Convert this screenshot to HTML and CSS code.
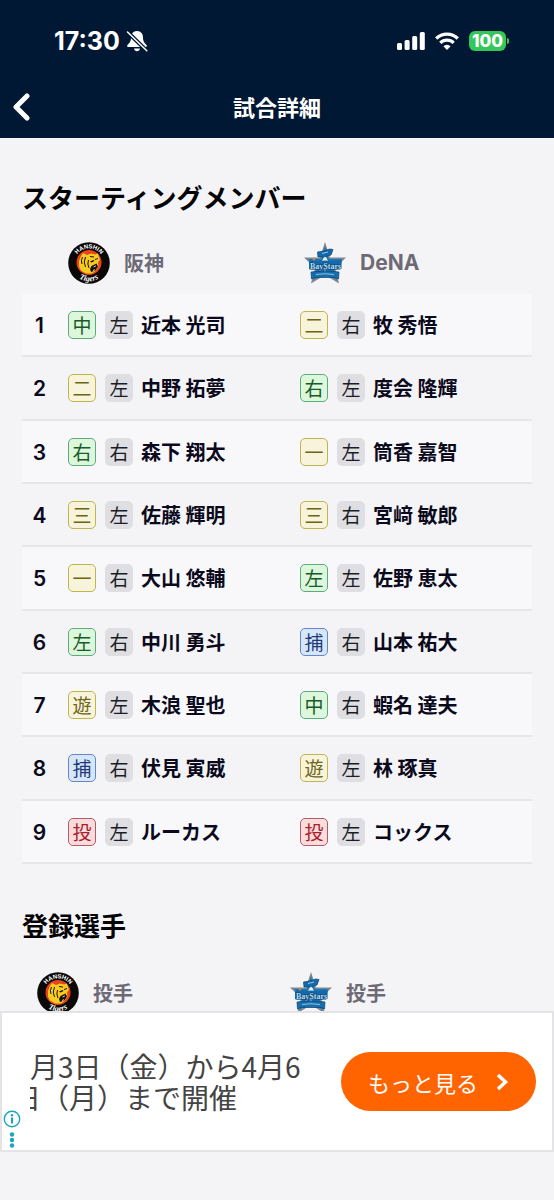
FILE: index.html
```html
<!DOCTYPE html>
<html lang="ja">
<head>
<meta charset="utf-8">
<meta name="viewport" content="width=device-width, initial-scale=1">
<title>試合詳細</title>
<link rel="stylesheet" href="styles.css">
</head>
<body>
<svg class="defs" width="0" height="0" aria-hidden="true">
  <defs>
    <path id="arc-top" d="M7.1 24.5A14.4 14.4 0 1 1 34.9 24.5"/>
    <path id="arc-bottom" d="M2.800 24A18.500 18.500 0 0 0 39.200 24"/>
    <symbol id="tigers" viewBox="0 0 42 42">
      <circle cx="21" cy="21" r="20.8" fill="#0b0808"/>
      <circle cx="21" cy="20.5" r="12.500" fill="#e8431f"/>
      <path d="M11 19l2-5 2-3 4 2 4-1.500 4 1 3-1 1 4 1 2-2 3 .5 4-2.500 4-4 3-6 0-5-3-2-4z" fill="#f7cb20"/>
      <path d="M14.500 15q-2 4-.5 7M17.500 15q-2.500 5 0 10M20.500 18q-1.500 4 .5 8M22 14.500l4 .5M27 17.500l3-1" fill="none" stroke="#1a1008" stroke-width="1"/>
      <path d="M22 19.500l3.500-1.500 1 1-3 1.500zM23.500 24l5-2.500 1.500 3-2.500 4-4.500 1.500-1-3z" fill="#1a1008"/>
      <path d="M25.500 25l2.500-1.200M25 28.500l2-.8" stroke="#fff" stroke-width=".8"/>
      <text class="tigers-top" text-anchor="middle"><textPath href="#arc-top" startOffset="50%">HANSHIN</textPath></text>
      <text class="tigers-bottom" text-anchor="middle"><textPath href="#arc-bottom" startOffset="50%">Tigers</textPath></text>
    </symbol>
    <symbol id="baystars" viewBox="0 0 42 42">
      <path d="M21 0l5 15.500H42L31 26l4 15.500L21 33 7 41.500 11 26 0 15.500h16z" fill="#7c8790"/>
      <path d="M21 4l3.800 13H38l-9 8 4 13-12-8-12 8 4-13-9-8h13.200z" fill="#1976b8"/>
      <path d="M21 13l3.500 7-3.500 12-3.500-12z" fill="#e4f0f6"/>
      <path d="M13.500 10q7-.5 12-3l3.500.5-2 5.500q-6 2.500-13 2z" fill="#1469ac" stroke="#0b416f" stroke-width=".7"/>
      <path d="M18 11.500l6-1.500" stroke="#9bc8e2" stroke-width="1"/>
      <path d="M5 19l5-2 4 2 7-.5 7 .5 10-1-1 9-9 1-7-.8-8 .8-8-1z" fill="#1469ac"/>
      <path d="M7 30q14-2.500 28 0l-.5 7q-2-1.500-5-1.500h-17q-3 0-5 1.500z" fill="#176eaf" stroke="#0b416f" stroke-width=".7"/>
      <path d="M12 32.500q9-1.500 18 0" fill="none" stroke="#8fc1df" stroke-width="1"/>
      <text class="baystars-name" x="21.500" y="26.500" text-anchor="middle">BayStars</text>
      <circle cx="10" cy="17" r="1.500" fill="#b98a60"/>
    </symbol>
  </defs>
</svg>

<header class="app-header">
  <div class="status-bar">
    <div class="status-group">
      <span class="clock">17:30</span>
      <svg width="22" height="22" viewBox="0 0 22 22" aria-hidden="true">
        <path d="M11 1C7 1 5 4 5 7.500c0 4-1.500 5.500-3.500 7.500-.8.900-.4 2 .8 2h17.400c1.200 0 1.600-1.100.8-2-2-2-3.500-3.500-3.500-7.500C17 4 15 1 11 1zM8 18.500h6c-.3 1.800-1.500 2.800-3 2.800s-2.700-1-3-2.800z" fill="#fff"/>
        <path d="M1.500 2L20.800 20.800" stroke="#001834" stroke-width="4"/>
        <path d="M1.500 2L20.800 20.800" stroke="#fff" stroke-width="1.500" stroke-linecap="round"/>
      </svg>
    </div>
    <div class="status-group status-right">
      <svg width="28" height="18" viewBox="0 0 28 18" fill="#fff" aria-hidden="true">
        <rect x="0" y="11" width="5" height="7" rx="1.500"/><rect x="7.600" y="8" width="5" height="10" rx="1.500"/><rect x="15.200" y="4" width="5" height="14" rx="1.500"/><rect x="22.800" width="5" height="18" rx="1.500"/>
      </svg>
      <svg width="24" height="18" viewBox="0 0 24 18" fill="none" stroke="#fff" stroke-width="3.200" aria-hidden="true">
        <path d="M1.200 6.500a15.500 15.500 0 0 1 21.600 0M5.300 10.800a9.500 9.500 0 0 1 13.400 0"/>
        <path d="M12 18l-3.600-3.700a5 5 0 0 1 7.200 0z" fill="#fff" stroke="none"/>
      </svg>
      <span class="battery">100</span>
    </div>
  </div>
  <nav class="nav-bar">
    <a class="back" href="#" aria-label="戻る">
      <svg width="18" height="28" viewBox="0 0 18 28" fill="none" stroke="#fff" stroke-width="5" stroke-linecap="round" stroke-linejoin="round" aria-hidden="true"><path d="M15 3L4 14l11 11"/></svg>
    </a>
    <h1 class="nav-title">試合詳細</h1>
  </nav>
</header>

<main class="content">
  <h2 class="section-title">スターティングメンバー</h2>
  <table class="lineup">
    <colgroup><col class="col-order"><col><col></colgroup>
    <thead>
      <tr>
        <td></td>
        <th scope="col"><div class="team"><svg class="logo" aria-hidden="true"><use href="#tigers"/></svg>阪神</div></th>
        <th scope="col"><div class="team visitor"><svg class="logo" aria-hidden="true"><use href="#baystars"/></svg><span class="latin">DeNA</span></div></th>
      </tr>
    </thead>
    <tbody>
      <tr><th scope="row">1</th>
        <td><div class="player"><span class="badge outfield">中</span><span class="badge">左</span><b>近本 光司</b></div></td>
        <td><div class="player"><span class="badge infield">二</span><span class="badge">右</span><b>牧 秀悟</b></div></td></tr>
      <tr><th scope="row">2</th>
        <td><div class="player"><span class="badge infield">二</span><span class="badge">左</span><b>中野 拓夢</b></div></td>
        <td><div class="player"><span class="badge outfield">右</span><span class="badge">左</span><b>度会 隆輝</b></div></td></tr>
      <tr><th scope="row">3</th>
        <td><div class="player"><span class="badge outfield">右</span><span class="badge">右</span><b>森下 翔太</b></div></td>
        <td><div class="player"><span class="badge infield">一</span><span class="badge">左</span><b>筒香 嘉智</b></div></td></tr>
      <tr><th scope="row">4</th>
        <td><div class="player"><span class="badge infield">三</span><span class="badge">左</span><b>佐藤 輝明</b></div></td>
        <td><div class="player"><span class="badge infield">三</span><span class="badge">右</span><b>宮﨑 敏郎</b></div></td></tr>
      <tr><th scope="row">5</th>
        <td><div class="player"><span class="badge infield">一</span><span class="badge">右</span><b>大山 悠輔</b></div></td>
        <td><div class="player"><span class="badge outfield">左</span><span class="badge">左</span><b>佐野 恵太</b></div></td></tr>
      <tr><th scope="row">6</th>
        <td><div class="player"><span class="badge outfield">左</span><span class="badge">右</span><b>中川 勇斗</b></div></td>
        <td><div class="player"><span class="badge catcher">捕</span><span class="badge">右</span><b>山本 祐大</b></div></td></tr>
      <tr><th scope="row">7</th>
        <td><div class="player"><span class="badge infield">遊</span><span class="badge">左</span><b>木浪 聖也</b></div></td>
        <td><div class="player"><span class="badge outfield">中</span><span class="badge">右</span><b>蝦名 達夫</b></div></td></tr>
      <tr><th scope="row">8</th>
        <td><div class="player"><span class="badge catcher">捕</span><span class="badge">右</span><b>伏見 寅威</b></div></td>
        <td><div class="player"><span class="badge infield">遊</span><span class="badge">左</span><b>林 琢真</b></div></td></tr>
      <tr><th scope="row">9</th>
        <td><div class="player"><span class="badge pitcher">投</span><span class="badge">左</span><b>ルーカス</b></div></td>
        <td><div class="player"><span class="badge pitcher">投</span><span class="badge">左</span><b>コックス</b></div></td></tr>
    </tbody>
  </table>

  <h2 class="section-title roster-title">登録選手</h2>
  <div class="roster">
    <div class="team"><svg class="logo" aria-hidden="true"><use href="#tigers"/></svg>投手</div>
    <div class="team"><svg class="logo" aria-hidden="true"><use href="#baystars"/></svg>投手</div>
  </div>
</main>

<aside class="ad">
  <div class="ad-copy">
    <p>月3日（金）から4月6</p>
    <p class="ad-line">日（月）まで開催</p>
  </div>
  <a class="ad-button" href="#">もっと見る
    <svg width="13" height="18" viewBox="0 0 13 18" fill="none" stroke="#fff" stroke-width="3.500" aria-hidden="true"><path d="M2 2l7.500 7L2 16"/></svg>
  </a>
  <button class="ad-options" type="button" aria-label="広告の情報">
    <svg width="18" height="40" viewBox="0 0 18 40" aria-hidden="true">
      <circle cx="9" cy="9" r="7.700" fill="none" stroke="#18a6bd" stroke-width="1.400"/>
      <circle cx="9" cy="5.200" r="1.200" fill="#18a6bd"/><path d="M9 7.500v6" stroke="#18a6bd" stroke-width="2"/>
      <g fill="#18a6bd"><circle cx="9" cy="24.500" r="2.200"/><circle cx="9" cy="30" r="2.200"/><circle cx="9" cy="35.500" r="2.200"/></g>
    </svg>
  </button>
</aside>
</body>
</html>
```

FILE: styles.css
```css
* { box-sizing: border-box; }

body {
  margin: 0;
  background: #f4f4f6;
  color: #0b0a1c;
  font-family: "Noto Sans CJK JP", sans-serif;
}

.defs { position: absolute; }

/* Header */
.app-header {
  padding-top: 22px;
  background: #001834;
  color: #fff;
}

.status-bar {
  display: flex;
  justify-content: space-between;
  align-items: center;
  height: 38px;
  padding: 0 48px 0 54px;
}

.status-group { display: flex; align-items: center; gap: 6px; }
.status-right { gap: 10px; }

.clock { font: 700 25px/38px Inter, sans-serif; }

.battery {
  position: relative;
  width: 37px;
  border-radius: 6px;
  background: #34c759;
  font: 800 17px/20px Inter, sans-serif;
  text-align: center;
}

.battery::after {
  content: "";
  position: absolute;
  top: 7px;
  right: -3px;
  width: 2px;
  height: 6px;
  border-radius: 0 2px 2px 0;
  background: #34c759;
}

.nav-bar {
  display: grid;
  grid-template-columns: 48px 1fr 48px;
  align-items: center;
  height: 78px;
  padding-top: 16px;
}

.back { display: flex; padding: 8px 12px; }

.nav-title {
  margin: 0;
  padding-bottom: 2px;
  font-size: 22px;
  line-height: 32px;
  text-align: center;
}

/* Sections */
.content { padding: 40px 22px 0; }

.section-title {
  margin: 0 0 16px;
  color: #050507;
  font-size: 26px;
  line-height: 38px;
}

.roster-title { margin-top: 42px; }

.team {
  display: flex;
  align-items: center;
  gap: 14px;
  color: #6d6a76;
  font-size: 20px;
  font-weight: 700;
  line-height: 42px;
}

.visitor { padding-left: 4px; }

.latin { font-family: Inter, sans-serif; font-size: 21px; }

.logo { flex: none; width: 42px; height: 42px; }

.tigers-top { fill: #fff; font: 700 6px "Liberation Sans", sans-serif; }
.tigers-bottom { fill: #fff; font: italic 700 8px "Liberation Serif", serif; }
.baystars-name {
  fill: #b9dcee;
  stroke: #0b416f;
  stroke-width: 1px;
  paint-order: stroke;
  font: 700 8px "Liberation Serif", serif;
}

/* Lineup */
.lineup {
  width: 100%;
  table-layout: fixed;
  border-collapse: separate;
  border-spacing: 0;
}

.col-order { width: 46px; }

.lineup th, .lineup td { padding: 0; text-align: left; }
.lineup thead tr { height: 62px; }
.lineup tbody tr { height: 63px; }
.lineup tbody tr:nth-child(3n + 2) { height: 64px; }
.lineup tbody tr:nth-child(odd) { background: #f8f8fb; }
.lineup tbody th, .lineup tbody td { border-bottom: 2px solid #e6e6ea; }

.lineup tbody th {
  padding: 2px 11px 0 0;
  font: 600 21px/28px Inter, sans-serif;
  text-align: center;
}

.player { display: flex; align-items: center; gap: 9px; }
.player b { margin-left: -1px; font-size: 20px; line-height: 28px; white-space: nowrap; }

.badge {
  flex: none;
  width: 28px;
  height: 28px;
  border: 1px solid #dedee3;
  border-radius: 5px;
  background: #dedee3;
  color: #1c1c24;
  font-size: 19px;
  font-weight: 400;
  line-height: 26px;
  text-align: center;
}

.badge.outfield { border-color: #5cab7d; background: #dcf7dc; color: #175c28; }
.badge.infield { border-color: #bdb54e; background: #f8f4dc; color: #6d6516; }
.badge.catcher { border-color: #6585cc; background: #d7e7fa; color: #1f3b7c; }
.badge.pitcher { border-color: #b95a66; background: #fadcdc; color: #a8202c; }

.roster {
  display: grid;
  grid-template-columns: 1fr 1fr;
  padding: 12px 4px 0 0;
}

.roster .team { padding-left: 15px; }

/* Anchored advertisement */
.ad {
  position: fixed;
  right: 0;
  bottom: 48px;
  left: 0;
  display: flex;
  align-items: center;
  justify-content: space-between;
  min-height: 141px;
  padding: 0 16px 0 28px;
  border: 2px solid #e4e4e7;
  background: #fff;
}

.ad-copy { overflow: hidden; }

.ad-copy p {
  margin: 0;
  color: #444;
  font-size: 28px;
  line-height: 31px;
  white-space: nowrap;
}

.ad-copy .ad-line { margin-left: -17px; }

.ad-button {
  display: flex;
  flex: none;
  align-items: center;
  justify-content: center;
  gap: 18px;
  width: 195px;
  height: 59px;
  border-radius: 30px;
  background: #ff6400;
  color: #fff;
  font-size: 22px;
  line-height: 34px;
  text-decoration: none;
}

.ad-options {
  position: absolute;
  bottom: 0;
  left: 0;
  display: flex;
  padding: 0 1px;
  border: 0;
  background: none;
}
```
